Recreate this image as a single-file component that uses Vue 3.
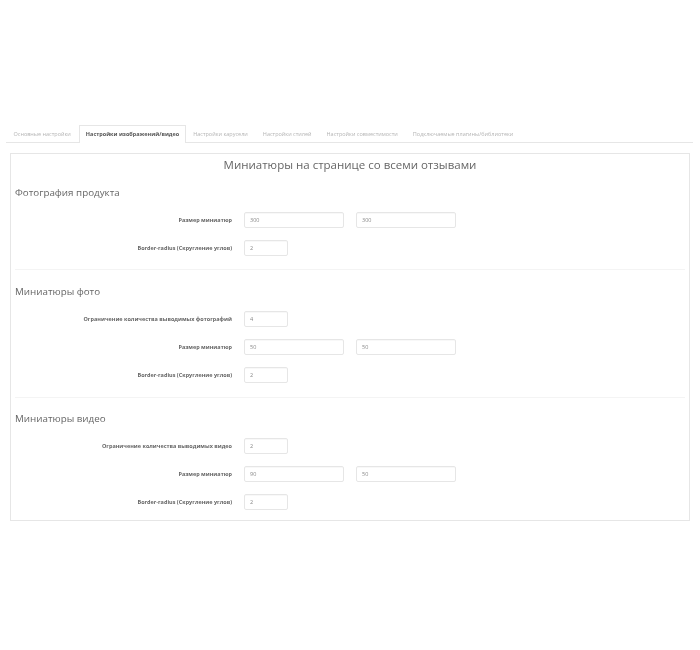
<template>
  <div class="page">
    <ul class="tabs">
      <li v-for="tab in tabs" :key="tab" class="tab" :class="{ active: tab === activeTab }">{{ tab }}</li>
    </ul>
    <div class="panel">
      <h2>Миниатюры на странице со всеми отзывами</h2>
      <section v-for="section in sections" :key="section.title" class="section">
        <h3>{{ section.title }}</h3>
        <div v-for="row in section.rows" :key="row.label" class="row">
          <label>{{ row.label }}</label>
          <div class="fields">
            <input
              v-for="(value, i) in row.values"
              :key="i"
              :value="value"
              :class="row.values.length > 1 ? 'wide' : 'small'"
              type="text"
            >
          </div>
        </div>
      </section>
    </div>
  </div>
</template>

<script setup>
const activeTab = 'Настройки изображений/видео'

const tabs = [
  'Основные настройки',
  activeTab,
  'Настройки карусели',
  'Настройки стилей',
  'Настройки совместимости',
  'Подключаемые плагины/библиотеки'
]

const radiusLabel = 'Border-radius (Скругление углов)'
const sizeLabel = 'Размер миниатюр'

const sections = [
  {
    title: 'Фотография продукта',
    rows: [
      { label: sizeLabel, values: ['300', '300'] },
      { label: radiusLabel, values: ['2'] }
    ]
  },
  {
    title: 'Миниатюры фото',
    rows: [
      { label: 'Ограничение количества выводимых фотографий', values: ['4'] },
      { label: sizeLabel, values: ['50', '50'] },
      { label: radiusLabel, values: ['2'] }
    ]
  },
  {
    title: 'Миниатюры видео',
    rows: [
      { label: 'Ограничение количества выводимых видео', values: ['2'] },
      { label: sizeLabel, values: ['90', '50'] },
      { label: radiusLabel, values: ['2'] }
    ]
  }
]
</script>

<style>
body {
  background: #fff;
}
</style>

<style scoped>
.page {
  height: 650px;
  box-sizing: border-box;
  padding: 125px 7px 0 6px;
  font-family: "Open Sans", "Noto Sans", sans-serif;
  color: #666;
  will-change: opacity;
}

.tabs {
  display: flex;
  height: 18px;
  box-sizing: border-box;
  margin: 0;
  padding: 0;
  list-style: none;
  border-bottom: 1px solid #e6e6e6;
}

.tab {
  height: 17px;
  box-sizing: border-box;
  padding: 0 7.5px;
  font-size: 5.5px;
  line-height: 18px;
  color: #b4b4b4;
  white-space: nowrap;
}

.tab.active {
  height: 18px;
  margin-left: 1px;
  padding: 0 5.5px;
  border: 1px solid #e6e6e6;
  border-bottom: 0;
  background: #fff;
  font-weight: 700;
  line-height: 17px;
  color: #555;
}

.panel {
  margin: 10px 3px 0 4px;
  padding: 0 4px 10px;
  border: 1px solid #e6e6e6;
}

h2 {
  margin: 0;
  padding-top: 2px;
  font-size: 11.5px;
  font-weight: 400;
  line-height: 17px;
  text-align: center;
  color: #666;
}

.section {
  padding-bottom: 13px;
  border-bottom: 1px solid #f4f4f4;
}

.section:nth-child(3) {
  padding-bottom: 14px;
}

.section:last-child {
  padding-bottom: 0;
  border-bottom: 0;
}

h3 {
  margin: 12px 0 0;
  font-size: 9.8px;
  font-weight: 400;
  line-height: 15px;
  color: #666;
}

.section:nth-child(3) h3 {
  margin-top: 14px;
}

.section:last-child h3 {
  margin-top: 13px;
}

.row {
  display: flex;
  align-items: center;
  height: 16px;
  margin-top: 12px;
}

.row label {
  width: 217px;
  font-size: 5.5px;
  font-weight: 700;
  text-align: right;
  color: #666;
  white-space: nowrap;
}

.fields {
  display: flex;
  gap: 12px;
  margin-left: 12px;
}

input {
  height: 16px;
  box-sizing: border-box;
  padding: 0 5px;
  border: 1px solid #e6e6e6;
  border-radius: 2px;
  background: #fff;
  font-family: inherit;
  font-size: 5.5px;
  color: #888;
  box-shadow: inset 0 1px 1px rgba(0, 0, 0, 0.03);
}

input.wide {
  width: 100px;
}

input.small {
  width: 44px;
}
</style>
